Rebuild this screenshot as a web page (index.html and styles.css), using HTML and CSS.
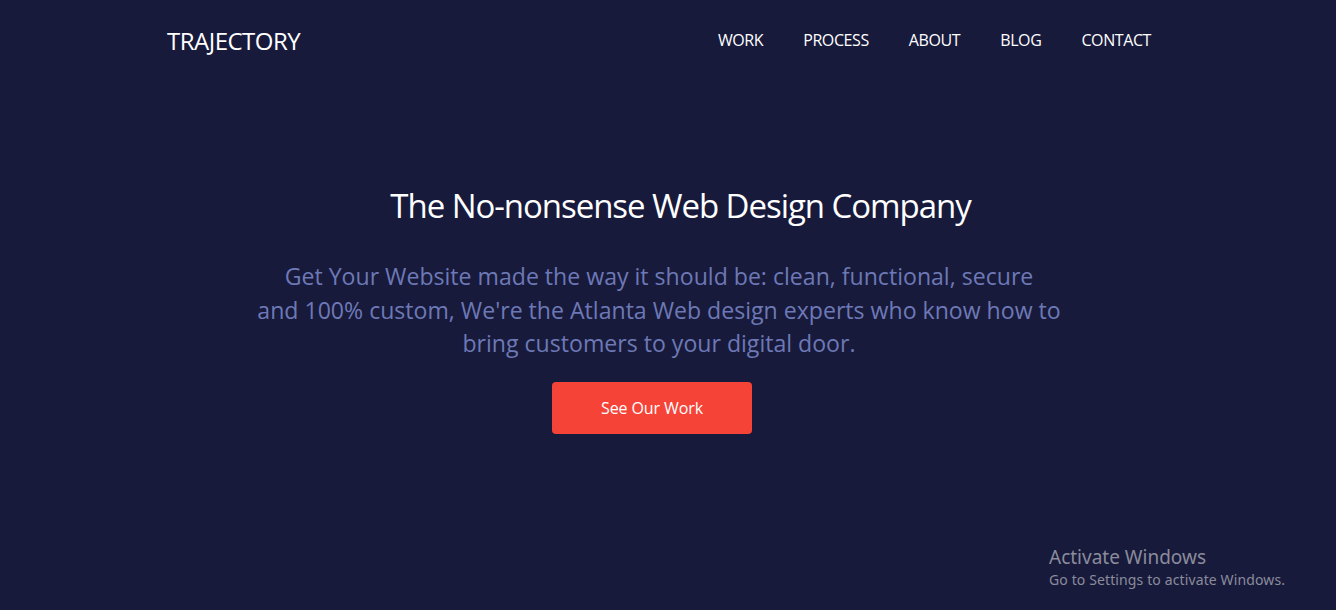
FILE: index.html
```html
<!DOCTYPE html>
<html lang="en">
<head>
<meta charset="utf-8">
<title>Trajectory</title>
<link rel="stylesheet" href="styles.css">
</head>
<body>
<header class="topbar">
  <div class="container nav-row">
    <a class="logo" href="#">TRAJECTORY</a>
    <nav class="menu">
      <a href="#">WORK</a>
      <a href="#">PROCESS</a>
      <a href="#">ABOUT</a>
      <a href="#">BLOG</a>
      <a href="#">CONTACT</a>
    </nav>
  </div>
</header>
<main class="hero">
  <h1 class="hero-title">The No-nonsense Web Design Company</h1>
  <p class="hero-text">Get Your Website made the way it should be: clean, functional, secure<br>and 100% custom, We're the Atlanta Web design experts who know how to bring customers to your digital door.</p>
  <a class="hero-btn" href="#">See Our Work</a>
</main>
<div class="activate">
  <div class="activate-title">Activate Windows</div>
  <div class="activate-sub">Go to Settings to activate Windows.</div>
</div>
</body>
</html>
```
FILE: styles.css
```css
* { box-sizing: border-box; }
html, body { height: 100%; }
body {
  margin: 0;
  background: #181a3b;
  font-family: "Open Sans", "Noto Sans", sans-serif;
  color: #fff;
  overflow: hidden;
}
a { text-decoration: none; color: inherit; }
.container {
  width: 1004px;
  margin: 0 auto;
}
.topbar { padding-top: 22px; }
.nav-row {
  display: flex;
  align-items: center;
  justify-content: space-between;
  height: 36px;
}
.logo {
  font-size: 24px;
  font-weight: 500;
  letter-spacing: -0.5px;
  margin-left: 1px;
}
.menu { display: flex; margin-right: -1px; }
.menu a {
  font-size: 16px;
  letter-spacing: -0.4px;
  padding: 0 20px;
}
.hero {
  display: flex;
  flex-direction: column;
  align-items: center;
  text-align: center;
  padding-top: 126px;
}
.hero-title {
  margin: 0;
  font-size: 33px;
  font-weight: 400;
  line-height: 44px;
  letter-spacing: -1.05px;
  padding-left: 25px;
}
.hero-text {
  margin: 32px 0 0;
  width: 860px;
  font-size: 23.1px;
  line-height: 33.5px;
  letter-spacing: 0;
  color: #6d79b6;
  padding-right: 18px;
}
.hero-btn {
  margin-top: 21px;
  width: 200px;
  height: 52px;
  border-radius: 4px;
  background: #f54337;
  display: flex;
  align-items: center;
  justify-content: center;
  font-size: 16px;
  letter-spacing: -0.1px;
  margin-right: 32px;
}
.activate {
  position: absolute;
  left: 1049px;
  top: 544px;
  color: #8a8c9c;
  font-family: "Noto Sans", "Open Sans", sans-serif;
}
.activate-title { font-size: 19px; line-height: 26px; }
.activate-sub { font-size: 14px; line-height: 20px; letter-spacing: 0.12px; }
```
